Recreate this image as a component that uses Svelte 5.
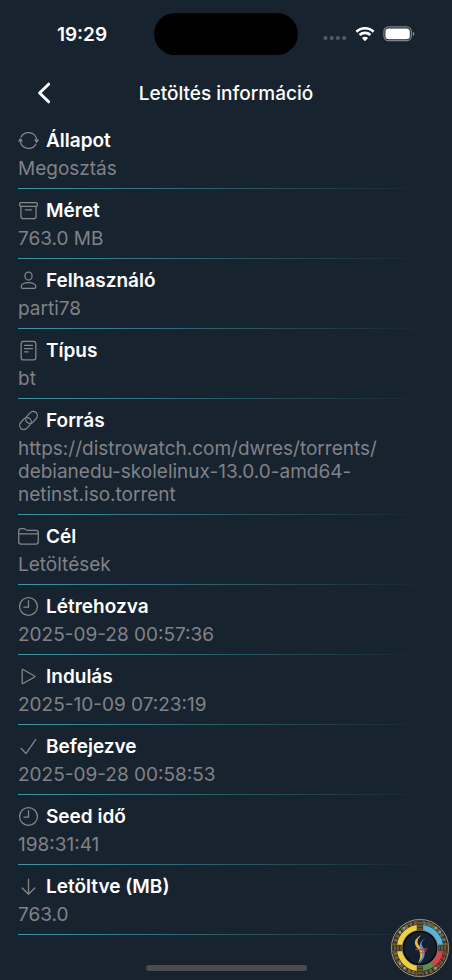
<script>
    let rows = [
        { icon: 'sync', label: 'Állapot', value: 'Megosztás' },
        { icon: 'archive', label: 'Méret', value: '763.0 MB' },
        { icon: 'user', label: 'Felhasználó', value: 'parti78' },
        { icon: 'doc', label: 'Típus', value: 'bt' },
        { icon: 'link', label: 'Forrás', value: 'https://distrowatch.com/dwres/torrents/debianedu-skolelinux-13.0.0-amd64-netinst.iso.torrent' },
        { icon: 'folder', label: 'Cél', value: 'Letöltések' },
        { icon: 'clock', label: 'Létrehozva', value: '2025-09-28 00:57:36' },
        { icon: 'play', label: 'Indulás', value: '2025-10-09 07:23:19' },
        { icon: 'check', label: 'Befejezve', value: '2025-09-28 00:58:53' },
        { icon: 'clock', label: 'Seed idő', value: '198:31:41' },
        { icon: 'down', label: 'Letöltve (MB)', value: '763.0' }
    ]

    // ring of the badge: start angle, sweep, color
    let segments = [
        [8, 74, '#58b4d8'],
        [98, 44, '#d8434a'],
        [142, 30, '#5c8c4e'],
        [188, 74, '#ecd044'],
        [278, 74, '#ecd044']
    ]

    function arc(start, sweep, r) {
        const point = (deg) => {
            const a = (deg - 90) * Math.PI / 180
            return (30 + r * Math.cos(a)).toFixed(2) + ' ' + (30 + r * Math.sin(a)).toFixed(2)
        }
        return `M${point(start)}A${r} ${r} 0 0 1 ${point(start + sweep)}`
    }
</script>

<div class="screen">
    <div class="status">
        <div class="time">19:29</div>
        <div class="island"></div>
        <div class="signals">
            <svg width="24" height="14" viewBox="0 0 24 14" fill="#505a65">
                <circle cx="2.5" cy="11" r="2.1" />
                <circle cx="8.7" cy="11" r="2.1" />
                <circle cx="14.9" cy="11" r="2.1" />
                <circle cx="21.1" cy="11" r="2.1" />
            </svg>
            <svg width="20" height="16" viewBox="0 0 20 16" fill="none" stroke="#fff" stroke-width="2.6">
                <path d="M1.4 5.8C6.2 1.1 13.8 1.1 18.6 5.8" />
                <path d="M4.6 9C7.6 6.2 12.4 6.2 15.4 9" />
                <path d="M10 15.2L6.9 12C8.7 10.4 11.3 10.4 13.1 12Z" fill="#fff" stroke="none" />
            </svg>
            <svg width="32" height="16" viewBox="0 0 32 16">
                <rect x="0.9" y="0.9" width="27.4" height="13.8" rx="4.6" fill="none" stroke="#7b838b" stroke-width="1.2" />
                <rect x="2.4" y="2.4" width="24.4" height="10.8" rx="3.2" fill="#fff" />
                <path d="M29.8 5.4Q31.4 6 31.4 7.8T29.8 10.2Z" fill="#7b838b" />
            </svg>
        </div>
    </div>

    <header>
        <button class="back" aria-label="Vissza">
            <svg width="14" height="22" viewBox="0 0 14 22" fill="none" stroke="#fff" stroke-width="3" stroke-linecap="round" stroke-linejoin="round">
                <path d="M11.6 2.2L2.6 11L11.6 19.8" />
            </svg>
        </button>
        <h1>Letöltés információ</h1>
    </header>

    <dl>
        {#each rows as row}
            <div class="row">
                <dt>
                    <svg class="icon" viewBox="0 0 20 20">
                        {#if row.icon === 'sync'}
                            <path d="M3 6.5A8 8 0 0 1 17.7 8.6M17 13.5A8 8 0 0 1 2.3 11.4" />
                            <path class="solid" d="M0 11L2.2 7.4L4.8 11ZM15.2 9L17.8 12.6L20 9Z" />
                        {:else if row.icon === 'archive'}
                            <rect x="1.6" y="2.4" width="16.8" height="3.6" rx="1" />
                            <path d="M2.8 6V15.4Q2.8 17.8 5.2 17.8H14.8Q17.2 17.8 17.2 15.4V6M7 9.3H13" />
                        {:else if row.icon === 'user'}
                            <ellipse cx="10" cy="5.8" rx="3.4" ry="3.8" />
                            <path d="M3 16C3 13.6 6 12 10 12S17 13.6 17 16Q17 17.4 15.6 17.4H4.4Q3 17.4 3 16Z" />
                        {:else if row.icon === 'doc'}
                            <rect x="3" y="1.2" width="14" height="17.8" rx="2.4" />
                            <path d="M6.3 5.2H13.7M6.3 8.2H13.7M6.3 11.2H9.8" />
                        {:else if row.icon === 'link'}
                            <rect x="6.6" y="3.1" width="12.6" height="8" rx="4" transform="rotate(-48 12.9 7.1)" />
                            <rect x="0.8" y="8.9" width="12.6" height="8" rx="4" transform="rotate(-48 7.1 12.9)" />
                        {:else if row.icon === 'folder'}
                            <path d="M0.7 15V4.6Q0.7 2.5 2.8 2.5H5.5Q6.4 2.5 7.1 3.2L7.6 3.7Q8.2 4.2 9.1 4.2H17.2Q19.3 4.2 19.3 6.3V15Q19.3 17.3 17.2 17.3H2.8Q0.7 17.3 0.7 15ZM0.7 7.6H19.3" />
                        {:else if row.icon === 'clock'}
                            <circle cx="10" cy="10" r="8.5" />
                            <path d="M10 4.5V10.6H5.6" />
                        {:else if row.icon === 'play'}
                            <path d="M4 3.8V16.2Q4 17 4.8 16.6L15.8 10.5Q16.6 10 15.8 9.5L4.8 3.4Q4 3 4 3.8Z" />
                        {:else if row.icon === 'check'}
                            <path d="M3 11.7L7.6 16.8L16.8 3.4" />
                        {:else}
                            <path d="M10 3V17.2M4 11.4L10 17.4L16 11.4" />
                        {/if}
                    </svg>
                    {row.label}
                </dt>
                <dd>{#each row.value.split(/(?<=\w\/)/) as part}{part}<wbr />{/each}</dd>
            </div>
        {/each}
    </dl>

    <div class="home"></div>

    <svg class="badge" viewBox="0 0 60 60" fill="none">
        <circle cx="30" cy="30" r="28.6" fill="#2f2b24" stroke="#a59a84" stroke-width="1" />
        <circle cx="30" cy="30" r="25.4" stroke="#7a622f" stroke-width="3.6" stroke-dasharray="3 1.5" />
        <circle cx="30" cy="30" r="26" stroke="#55625c" stroke-width="2" stroke-dasharray="1.5 4" />
        <path d={arc(10, 68, 25)} stroke="#4d7480" stroke-width="3" stroke-dasharray="2 3" />
        <path d={arc(98, 42, 25)} stroke="#853c34" stroke-width="3" stroke-dasharray="3 2" />
        {#each segments as [start, sweep, color]}
            <path d={arc(start, sweep, 20.6)} stroke={color} stroke-width="5.2" />
        {/each}
        {#each [0, 90, 180, 270] as angle}
            <g transform="rotate({angle} 30 30)">
                <rect x="27" y="2" width="6" height="11" fill="#34342f" stroke="#796536" stroke-width="0.6" />
                <path d="M29 4V11M31 4V11" stroke="#9b7c30" stroke-dasharray="2 1" />
            </g>
        {/each}
        {#each [38, 52, 142, 218, 232, 308, 322] as angle}
            <circle cx="30" cy="4.6" r="1.2" fill="#8fa9a6" transform="rotate({angle} 30 30)" />
        {/each}
        <circle cx="30" cy="30" r="16.8" fill="#14202d" stroke="#070b10" stroke-width="1.8" />
        <circle cx="30" cy="30" r="17.9" stroke="#b5ad90" stroke-width="0.6" />
        <path d="M31.6 17C23.4 21 23.6 26 27.4 30S31 39.6 28 45.6C34.8 38.6 33.4 32.8 30 28.8S26.4 21.6 31.6 17Z" fill="#e9b93f" />
        <path d="M36.4 19.6C28.6 24 29 28.4 31.2 31.8S32.4 40 29 46.4C36.4 39 35.4 33.6 33 29.6S31 24 36.4 19.6Z" fill="#6296d0" />
        <path d="M24.6 31.4C28.6 29.8 32 32.2 38 29.4C34.2 34 30 32.2 24.6 31.4ZM28.6 35Q33.4 35 37.6 31.6Q34 36.6 28.6 35Z" fill="#d5453c" />
    </svg>
</div>

<style>
    :global(body) {
        margin: 0;
        background: #182330;
    }
    .screen {
        position: relative;
        min-height: 100vh;
        box-sizing: border-box;
        display: flex;
        flex-direction: column;
        background: #182330;
        color: #fff;
        font-family: Inter, "Liberation Sans", sans-serif;
        font-size: 19px;
        line-height: 23px;
    }
    .status {
        display: grid;
        grid-template-columns: 1fr 144px 1fr;
        align-items: center;
        padding-top: 13px;
    }
    .time {
        padding-left: 10px;
        text-align: center;
        font-weight: 600;
    }
    .island {
        height: 42px;
        border-radius: 21px;
        background: #000;
    }
    .signals {
        display: flex;
        align-items: center;
        justify-content: flex-end;
        gap: 8px;
        padding-right: 37px;
    }
    header {
        display: grid;
        grid-template-columns: 60px 1fr 60px;
        align-items: center;
        height: 44px;
        padding-top: 16px;
    }
    .back {
        display: flex;
        justify-content: flex-end;
        padding: 0 9px 0 0;
        border: none;
        background: none;
    }
    h1 {
        margin: 0;
        text-align: center;
        font-size: 19px;
        font-weight: 500;
    }
    dl {
        margin: 4px 18px 0;
    }
    .row {
        padding: 10px 0 9px;
        background: linear-gradient(to right, #3f97a3, #182330 98%) bottom / 100% 1px no-repeat;
    }
    dt {
        display: flex;
        align-items: center;
        gap: 7px;
        font-weight: 600;
    }
    .icon {
        width: 21px;
        height: 21px;
        fill: none;
        stroke: #85878b;
        stroke-width: 1.2;
        stroke-linecap: round;
        stroke-linejoin: round;
    }
    .solid {
        fill: #85878b;
        stroke: none;
    }
    dd {
        margin: 5px 0 0;
        color: #808286;
        overflow-wrap: break-word;
    }
    .home {
        width: 161px;
        height: 6px;
        margin: auto auto 9px;
        border-radius: 3px;
        background: #4d4b4b;
    }
    .badge {
        position: absolute;
        right: 2px;
        bottom: 2px;
        width: 60px;
        height: 60px;
    }
</style>
